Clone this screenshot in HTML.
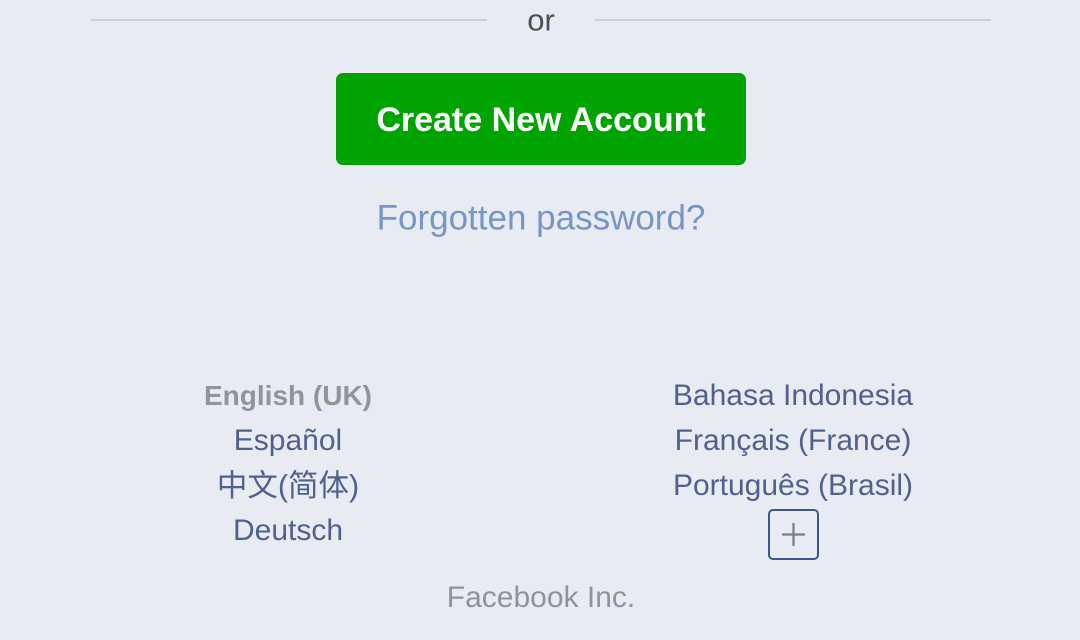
<!DOCTYPE html>
<html><head><meta charset="utf-8"><style>
html,body{margin:0;padding:0;}
body{width:1080px;height:640px;background:#e9ebf2;position:relative;overflow:hidden;font-family:"Liberation Sans","Noto Sans CJK SC",sans-serif;}
.c{position:absolute;transform:translate(-50%,-50%);white-space:nowrap;line-height:1;}
.line{position:absolute;top:19px;height:2px;background:#ccd0d5;width:396px;}
.btn{position:absolute;left:336px;top:73px;width:410px;height:92px;background:#00a400;border-radius:7px;}
.l{color:#4f6191;font-size:30px;}
.plus{position:absolute;left:768px;top:509px;width:47px;height:47px;border:2px solid #3e5690;border-radius:5px;}
</style></head><body>
<div class="line" style="left:91px"></div>
<div class="line" style="left:595px"></div>
<div class="c" style="left:541px;top:20px;font-size:31px;color:#4b4f56">or</div>
<div class="btn"></div>
<div class="c" style="left:541px;top:120px;font-size:34px;font-weight:bold;color:#fff">Create New Account</div>
<div class="c" style="left:541px;top:218px;font-size:35px;color:#7596c8">Forgotten password?</div>
<div class="c" style="left:288px;top:396px;font-size:28px;font-weight:bold;color:#90949c">English (UK)</div>
<div class="c l" style="left:288px;top:441px">Español</div>
<div class="c l" style="left:288px;top:486px;font-size:30.5px">中文(简体)</div>
<div class="c l" style="left:288px;top:531px">Deutsch</div>
<div class="c l" style="left:793px;top:396px">Bahasa Indonesia</div>
<div class="c l" style="left:793px;top:441px">Français (France)</div>
<div class="c l" style="left:793px;top:486px">Português (Brasil)</div>
<div class="plus"><svg width="47" height="47" viewBox="0 0 47 47"><path d="M23.5 12v23M12 23.5h23" stroke="#7a7d82" stroke-width="2.2" fill="none"/></svg></div>
<div class="c" style="left:541px;top:598px;font-size:30px;color:#8d949e">Facebook Inc.</div>
</body></html>
